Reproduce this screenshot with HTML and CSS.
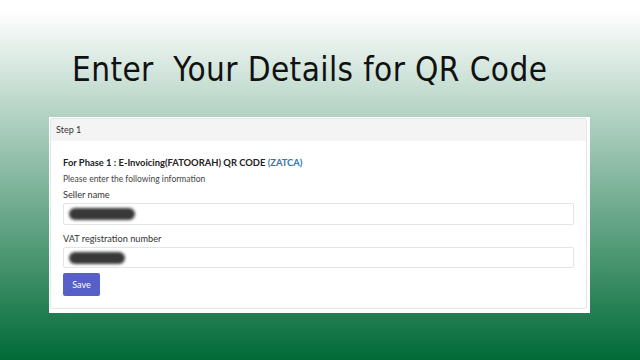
FILE: index.html
```html
<html>

<head>
	<meta charset="utf-8">
	<link rel="stylesheet" href="styles.css">
</head>

<body>

	<div class="slide">

		<h1 class="title">Enter&nbsp; Your Details for QR Code</h1>

		<div class="panel">
			<div class="card">
				<div class="card-header">Step 1</div>
				<div class="card-body">
					<h5 class="phase">For Phase 1 : E-Invoicing(FATOORAH) QR CODE <span class="blue">(ZATCA)</span></h5>
					<p class="hint">Please enter the following information</p>

					<label class="label">Seller name</label>
					<div class="input">
						<span class="scribble w-seller"></span>
					</div>

					<label class="label">VAT registration number</label>
					<div class="input last">
						<span class="scribble w-vat"></span>
					</div>

					<button class="btn">Save</button>
				</div>
			</div>
		</div>

	</div>

</body>

</html>
```

FILE: styles.css
```css
* {
	box-sizing: border-box;
}

html,
body {
	margin: 0;
	height: 100%;
}

body {
	font-family: Lato, "Open Sans", Arial, sans-serif;
	background: linear-gradient(#fff 0%, #fff 3%, #006a37 100%);
}

.slide {
	width: 640px;
	height: 360px;
	padding-top: 48px;
}

.title {
	font-family: "DejaVu Sans Condensed", "DejaVu Sans", sans-serif;
	font-stretch: condensed;
	font-weight: normal;
	font-size: 33px;
	letter-spacing: 0.4px;
	line-height: 44px;
	color: #111;
	margin: 0 0 25px 72px;
}

.panel {
	margin-left: 49px;
	width: 541px;
	background: #fff;
	padding: 1px 3px 4px 1px;
}

.card {
	border: 1px solid #e3e6ea;
	border-radius: 2px;
}

.card-header {
	background: #f4f4f4;
	font-size: 9px;
	color: #333;
	padding: 5px 5px;
	height: 22px;
	line-height: 12px;
}

.card-body {
	padding: 15px 12px 12px;
}

.phase {
	font-size: 9.4px;
	font-weight: bold;
	color: #222;
	margin: 0 0 3px;
	line-height: 14px;
}

.blue {
	color: #2a7ab8;
}

.hint {
	font-size: 8.5px;
	color: #444;
	margin: 0 0 3px;
	line-height: 12px;
}

.label {
	display: block;
	font-size: 9.2px;
	color: #333;
	line-height: 13px;
	margin-bottom: 2px;
}

.input {
	height: 22px;
	border: 1px solid #e2e4e8;
	border-radius: 2px;
	margin-bottom: 7px;
	padding: 4px 5px;
}

.input.last {
	height: 21px;
	margin-bottom: 5px;
}

.scribble {
	display: block;
	height: 12px;
	background: #383838;
	border-radius: 6px;
	filter: blur(1.4px);
}

.w-seller {
	width: 66px;
}

.w-vat {
	width: 56px;
}

.btn {
	display: block;
	font-family: Lato, "Open Sans", Arial, sans-serif;
	font-size: 9px;
	color: #fff;
	background: #5660c8;
	border: 0;
	border-radius: 2px;
	width: 37px;
	height: 23px;
	padding: 0;
}
```
